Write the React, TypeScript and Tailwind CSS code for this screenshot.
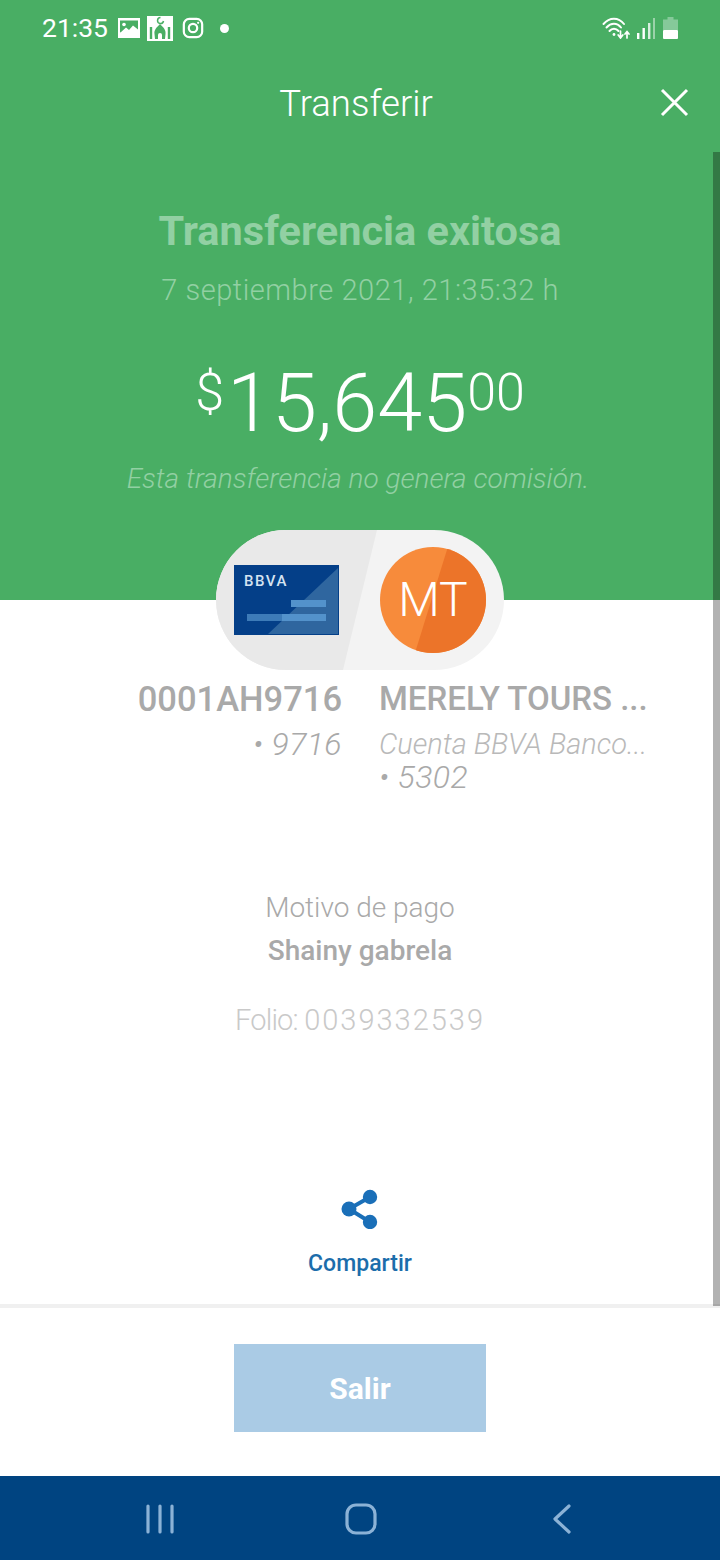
const sans = "font-['Roboto','Liberation_Sans',sans-serif]";

const StatusIcons = () => (
  <div className="flex items-center ml-[10px]">
    <svg width="22" height="20" viewBox="0 0 22 20">
      <rect x="0" y="0" width="22" height="20" fill="#fff" />
      <rect x="2" y="2.5" width="18" height="12" fill="#49ae64" />
      <circle cx="6" cy="6.5" r="1.8" fill="#fff" />
      <path d="M2 15 L8 9.5 L11 12 L15 7.5 L20 11.5 V16 H2 Z" fill="#fff" />
    </svg>
    <svg width="26" height="25" viewBox="0 0 26 25" className="ml-[7px]">
      <rect x="0" y="0" width="26" height="25" fill="#fff" />
      <path d="M4 23 V11 M22 23 V11" stroke="#49ae64" strokeWidth="2.4" />
      <path d="M13 8 C17 12 19 14 18.5 18 L18 23 H8 L7.5 18 C7 14 9 12 13 8 Z" fill="#49ae64" />
      <path d="M11 23 V19 A2 2 0 0 1 15 19 V23 Z" fill="#fff" />
      <path d="M13.5 1.5 A3 3 0 1 0 16.5 5" fill="none" stroke="#49ae64" strokeWidth="1.5" />
    </svg>
    <svg width="22" height="22" viewBox="0 0 24 24" fill="none" stroke="#fff" strokeWidth="2.4" className="ml-[9px]">
      <rect x="2" y="2" width="20" height="20" rx="6" />
      <circle cx="12" cy="12" r="4.6" />
      <circle cx="17.6" cy="6.4" r="1.2" fill="#fff" stroke="none" />
    </svg>
    <span className="ml-[16px] w-[9px] h-[9px] rounded-full bg-white" />
  </div>
);

const StatusRight = () => (
  <div className="flex items-center">
    <svg width="29" height="22" viewBox="0 0 29 22" fill="none" stroke="#fff" strokeWidth="2" strokeLinecap="round">
      <path d="M1.5 7 C7.5 0 16.5 0 22 7" />
      <path d="M4.5 10.5 C9 5.5 15 5.5 19 10.5" />
      <path d="M7.5 14 C10 11 14 11 16.5 14" />
      <circle cx="12" cy="17.5" r="1.4" fill="#fff" stroke="none" />
      <path d="M18.5 14 V20.5 M16.2 18 L18.5 21 L20.8 18" strokeWidth="1.7" />
      <path d="M25 21 V15 M23 17 L25 14.5 L27 17" strokeWidth="1.7" />
    </svg>
    <svg width="18" height="21" viewBox="0 0 18 21" className="ml-[6px]">
      <rect x="0" y="15" width="2.4" height="6" fill="#fff" />
      <rect x="5.5" y="10" width="2.4" height="11" fill="#fff" />
      <rect x="11" y="5" width="2.4" height="16" fill="#fff" opacity="0.8" />
      <rect x="16" y="0" width="2" height="21" fill="#fff" opacity="0.45" />
    </svg>
    <svg width="15" height="22" viewBox="0 0 15 22" className="ml-[8px]">
      <rect x="4.5" y="0" width="6" height="3" fill="#86c99a" />
      <rect x="0" y="2.5" width="15" height="10.5" fill="#86c99a" />
      <rect x="0" y="13" width="15" height="9" rx="1" fill="#fff" />
    </svg>
  </div>
);

const TransferPill = () => (
  <div className="relative w-[288px] h-[140px] rounded-full overflow-hidden bg-[#f3f3f3]">
    <div className="absolute inset-0 bg-[#e9e9e9] [clip-path:polygon(0_0,161px_0,127px_100%,0_100%)]" />
    <div className="absolute left-[18px] top-[35px] w-[105px] h-[70px]">
      <svg width="105" height="70" viewBox="0 0 105 70" className="block">
        <rect width="105" height="70" fill="#043f88" />
        <path d="M104 3 V69 H34 Z" fill="#2f669f" />
        <rect x="57" y="35" width="35" height="7" fill="#5392cb" />
        <rect x="13" y="49" width="79" height="7" fill="#3d7bb8" />
        <rect x="48" y="49" width="44" height="7" fill="#5392cb" />
      </svg>
      <span className={`absolute left-[10px] top-[6px] text-[15px] leading-[20px] tracking-[1.5px] font-medium text-[#d5e3f1] ${sans}`}>
        BBVA
      </span>
    </div>
    <div className="absolute left-[164px] top-[17px] w-[106px] h-[106px] rounded-full bg-[#f78b3b] overflow-hidden flex items-center justify-center">
      <div className="absolute inset-0 bg-[#ec7429] [clip-path:polygon(64%_0,100%_0,100%_100%,33%_100%)]" />
      <span className={`relative text-[48px] leading-none font-light text-white ${sans}`}>MT</span>
    </div>
  </div>
);

const App = () => {
  return (
    <div className={`relative w-[720px] h-[1560px] overflow-hidden bg-white flex flex-col ${sans}`}>
      {/* scrollbar over the content */}
      <div className="absolute right-0 top-[152px] w-[7px] h-[1154px] bg-black/30 z-10" />

      <div className="h-[600px] shrink-0 bg-[#49ae64] flex flex-col items-center">
        <div className="w-full h-[56px] pl-[42px] pr-[42px] flex items-center justify-between">
          <div className="flex items-center">
            <span className="text-[26.5px] leading-none text-white">21:35</span>
            <StatusIcons />
          </div>
          <StatusRight />
        </div>

        <div className="relative w-full h-[92px] flex items-center justify-center -mt-[1px] pt-[6px]">
          <span className="text-[36.5px] leading-none font-light text-white -ml-[8px]">Transferir</span>
          <svg width="30" height="30" viewBox="0 0 30 30" className="absolute left-[660px] top-[33px]" fill="none" stroke="#fff" strokeWidth="3">
            <path d="M2 2 L27 27 M27 2 L2 27" />
          </svg>
        </div>

        <h1 className="mt-[61px] text-[41.5px] leading-[46px] font-bold text-[#92d0a3]">Transferencia exitosa</h1>
        <p className="mt-[20px] text-[29px] leading-[32px] font-light tracking-[0.55px] text-[#92d0a3]">
          7 septiembre 2021, 21:35:32 h
        </p>
        <div className="mt-[57px] flex items-start text-white font-light">
          <span className="text-[52px] leading-[52px] mt-[4px]">$</span>
          <span className="text-[81px] leading-[81px] ml-[3px]">15,645</span>
          <span className="text-[52px] leading-[52px] mt-[4px]">00</span>
        </div>
        <p className="mt-[19px] text-[28px] leading-[32px] font-light italic text-[#92d0a3] -ml-[4px]">
          Esta transferencia no genera comisión.
        </p>
      </div>

      <div className="-mt-[70px] flex justify-center">
        <TransferPill />
      </div>

      <div className="mt-[9px] flex">
        <div className="w-[342px] shrink-0 flex flex-col items-end text-right">
          <p className="text-[34.5px] leading-[40px] font-medium text-[#a9a9a9]">0001AH9716</p>
          <p className="mt-[9px] text-[32px] leading-[32px] font-light italic tracking-[0.4px] text-[#a9a9a9]">• 9716</p>
        </div>
        <div className="ml-[37px] w-[300px]">
          <p className="text-[33px] leading-[40px] font-medium text-[#a9a9a9] whitespace-nowrap">MERELY TOURS ...</p>
          <p className="mt-[9px] text-[29px] leading-[32px] font-light italic text-[#b9b9b9] whitespace-nowrap">Cuenta BBVA Banco...</p>
          <p className="mt-[1px] text-[32px] leading-[32px] font-light italic tracking-[0.4px] text-[#a9a9a9]">• 5302</p>
        </div>
      </div>

      <div className="mt-[98px] flex flex-col items-center">
        <p className="text-[28px] leading-[34px] font-light text-[#a9a9a9]">Motivo de pago</p>
        <p className="mt-[9px] text-[28px] leading-[34px] font-medium text-[#a9a9a9]">Shainy gabrela</p>
        <p className="mt-[35px] text-[29px] leading-[34px] font-light text-[#c9c9c9]">
          <span className="tracking-[-0.8px]">Folio: </span>
          <span className="tracking-[2px]">0039332539</span>
        </p>
      </div>

      <div className="mt-[152px] flex flex-col items-center">
        <svg width="38" height="40" viewBox="0 0 38 40">
          <path d="M8 20 L29 8 M8 20 L29 33" stroke="#1a6fb8" strokeWidth="4" />
          <circle cx="8" cy="20" r="7.5" fill="#1a6fb8" />
          <circle cx="29" cy="8" r="7.2" fill="#1a6fb8" />
          <circle cx="29" cy="33" r="7.2" fill="#1a6fb8" />
        </svg>
        <span className="mt-[21px] text-[23px] leading-[28px] font-medium text-[#1c6dab]">Compartir</span>
      </div>

      <div className="mt-[26px] h-[4px] bg-[#f0f0f0]" />

      <div className="flex-1 flex items-start justify-center pt-[36px]">
        <button className="w-[252px] h-[88px] bg-[#aacbe5] text-[30px] font-bold text-white">Salir</button>
      </div>

      <div className="h-[84px] shrink-0 bg-[#004481] flex items-center pt-[2px]">
        <div className="w-full pl-[146px] pr-[148px] flex items-center justify-between">
          <svg width="28" height="30" viewBox="0 0 28 30" stroke="#8bb2d6" strokeWidth="3.2" strokeLinecap="round">
            <path d="M2 2 V28 M14 2 V28 M26 2 V28" />
          </svg>
          <svg width="32" height="32" viewBox="0 0 32 32" fill="none" stroke="#8bb2d6" strokeWidth="3.2" className="mr-[4px]">
            <rect x="2" y="2" width="28" height="28" rx="9" />
          </svg>
          <svg width="20" height="32" viewBox="0 0 20 32" fill="none" stroke="#8bb2d6" strokeWidth="3.2" strokeLinecap="round" strokeLinejoin="round">
            <path d="M17 3 L3 16 L17 29" />
          </svg>
        </div>
      </div>
    </div>
  );
};

export default App;
